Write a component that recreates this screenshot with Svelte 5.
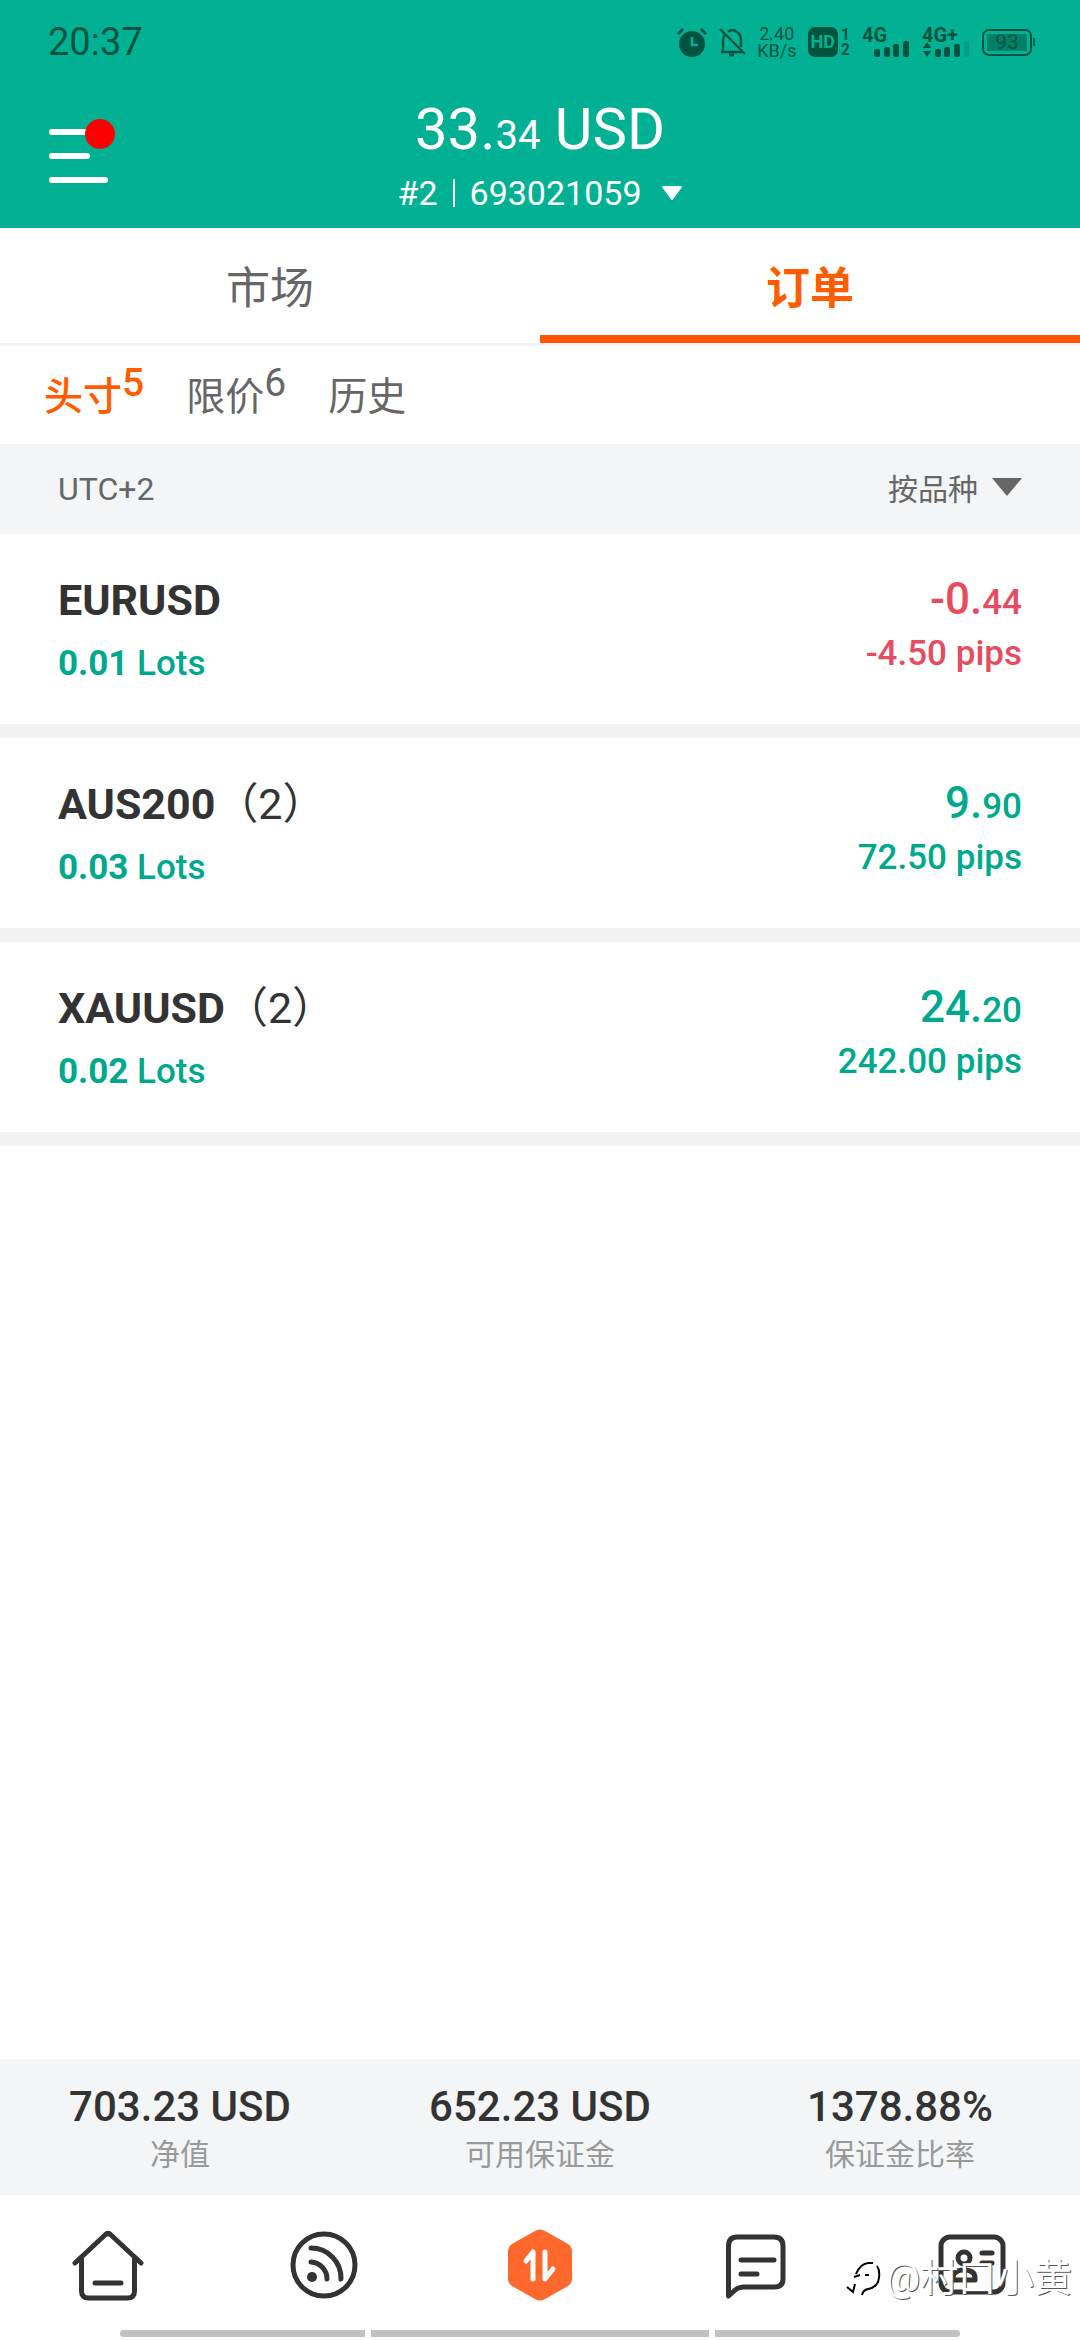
<script lang="ts">
	type Position = {
		symbol: string;
		count?: number;
		lots: string;
		profit: [string, string];
		pips: string;
		loss?: boolean;
	};

	const positions: Position[] = [
		{ symbol: 'EURUSD', lots: '0.01', profit: ['-0.', '44'], pips: '-4.50', loss: true },
		{ symbol: 'AUS200', count: 2, lots: '0.03', profit: ['9.', '90'], pips: '72.50' },
		{ symbol: 'XAUUSD', count: 2, lots: '0.02', profit: ['24.', '20'], pips: '242.00' }
	];

	const tabs = ['市场', '订单'];
	const filters = [
		{ label: '头寸', count: 5 },
		{ label: '限价', count: 6 },
		{ label: '历史', count: 0 }
	];
	const summary = [
		{ value: '703.23 USD', label: '净值' },
		{ value: '652.23 USD', label: '可用保证金' },
		{ value: '1378.88%', label: '保证金比率' }
	];

	let activeTab = $state('订单');
	let activeFilter = $state('头寸');
	let sortBy = $state('symbol');
</script>

<div class="app">
	<header>
		<div class="status">
			<time>20:37</time>
			<div class="status-icons">
				<svg width="30" height="30" viewBox="0 0 30 30">
					<circle cx="15" cy="17" r="13" fill="currentColor" />
					<path d="M1 7 6 2M29 7 24 2" stroke="currentColor" stroke-width="3" />
					<path d="M15 10v8h6" fill="none" stroke="#02b193" stroke-width="2.5" />
				</svg>
				<svg width="27" height="30" viewBox="0 0 27 30" fill="none" stroke="currentColor" stroke-width="2.4">
					<path d="M1 2 26 27M4 25V13Q4 10 6 8M9 5Q13 1 18 5Q22 8 22 13V20M2 25H24" />
					<path d="M10 28H15" stroke-width="3" />
				</svg>
				<span class="speed"><span>2.40</span><span>KB/s</span></span>
				<span class="volte">
					<span class="hd">HD</span>
					<span class="sims"><span>1</span><span>2</span></span>
				</span>
				<span class="signal">
					<span class="net">4G</span>
					<svg width="48" height="30" viewBox="0 0 48 30" fill="currentColor">
						<rect x="12" y="22" width="6" height="8" rx="2" />
						<rect x="22" y="20" width="6" height="10" rx="2" />
						<rect x="31" y="17" width="6" height="13" rx="2" />
						<rect x="41" y="14" width="6" height="16" rx="2" />
					</svg>
				</span>
				<span class="signal">
					<span class="net">4G+</span>
					<svg width="48" height="30" viewBox="0 0 48 30" fill="currentColor">
						<path d="M1 21 5 15 9 21ZM1 24H9L5 30Z" />
						<rect x="13" y="22" width="6" height="8" rx="2" />
						<rect x="22" y="20" width="6" height="10" rx="2" />
						<rect x="32" y="17" width="6" height="13" rx="2" />
						<rect x="42" y="14" width="5" height="16" rx="2" opacity="0.2" />
					</svg>
				</span>
				<span class="battery">
					<span class="level">93</span>
				</span>
			</div>
		</div>

		<div class="account">
			<button class="menu" type="button" aria-label="菜单">
				<svg width="68" height="66" viewBox="0 0 68 66">
					<path d="M4 15H40M4 39H39M4 63H57" stroke="#fff" stroke-width="6" stroke-linecap="round" />
					<circle cx="52" cy="17" r="15" fill="#f00" />
				</svg>
			</button>
			<div class="balance">
				<h1>33.<small>34</small> USD</h1>
				<button class="switch" type="button">
					<span>#2</span>
					<span class="divider"></span>
					<span>693021059</span>
					<svg width="22" height="15" viewBox="0 0 22 15">
						<path d="M2 1H20L11 13Z" fill="#fff" stroke="#fff" stroke-width="2" stroke-linejoin="round" />
					</svg>
				</button>
			</div>
		</div>
	</header>

	<nav class="tabs">
		{#each tabs as tab}
			<button type="button" class:active={activeTab === tab} onclick={() => (activeTab = tab)}>{tab}</button>
		{/each}
	</nav>

	<nav class="filters">
		{#each filters as { label, count }}
			<button type="button" class:active={activeFilter === label} onclick={() => (activeFilter = label)}>
				{label}{#if count}<sup>{count}</sup>{/if}
			</button>
		{/each}
	</nav>

	<div class="sort">
		<span>UTC+2</span>
		<label>
			<select bind:value={sortBy} aria-label="排序">
				<option value="symbol">按品种</option>
			</select>
			<svg width="30" height="22" viewBox="0 0 30 22"><path d="M0 0H30L15 18Z" fill="#666" /></svg>
		</label>
	</div>

	<main>
		{#each positions as position}
			<article class:loss={position.loss}>
				<div class="instrument">
					<h2>{position.symbol}{#if position.count}<span>（{position.count}）</span>{/if}</h2>
					<p><b>{position.lots}</b> Lots</p>
				</div>
				<div class="result">
					<strong>{position.profit[0]}<small>{position.profit[1]}</small></strong>
					<p>{position.pips} pips</p>
				</div>
			</article>
		{/each}
	</main>

	<footer>
		{#each summary as item}
			<div>
				<strong>{item.value}</strong>
				<span>{item.label}</span>
			</div>
		{/each}
	</footer>

	<nav class="bottom">
		<a href="#home" aria-label="首页">
			<svg width="72" height="72" viewBox="0 0 72 72">
				<path d="M3 34 33 6Q36 3 39 6L69 34M9.5 30V62Q9.5 69 16.5 69H55.5Q62.5 69 62.5 62V30M23 54H49" />
			</svg>
		</a>
		<a href="#feed" aria-label="动态">
			<svg width="72" height="72" viewBox="0 0 72 72">
				<circle cx="36" cy="36" r="31" />
				<path d="M23 19A30 30 0 0 1 53 50M23 33A17 17 0 0 1 39 50" />
				<circle class="solid" cx="24" cy="48" r="5" />
			</svg>
		</a>
		<a href="#trade" aria-label="交易">
			<svg width="72" height="72" viewBox="0 0 72 72">
				<path class="hexagon" d="M31 2Q36 -1 41 2L64 15Q68 18 68 22V50Q68 54 64 57L41 70Q36 73 31 70L8 57Q4 54 4 50V22Q4 18 8 15Z" />
				<path class="arrows" d="M22 32 29 23V50M41 23V50L49 40" />
			</svg>
		</a>
		<a href="#messages" aria-label="消息">
			<svg width="72" height="72" viewBox="0 0 72 72">
				<path d="M8.5 67V17Q8.5 8 17 8H54Q63 8 63 17V50Q63 58 54 58H24Q18 58 14 62Z" />
				<path d="M21 31H54M21 45H37" />
			</svg>
		</a>
		<a href="#profile" aria-label="我的">
			<svg width="72" height="72" viewBox="0 0 72 72">
				<rect x="5" y="8" width="62" height="55" rx="9" />
				<circle cx="28" cy="29" r="6" />
				<path d="M17 51V49Q17 41 28 41Q39 41 39 49V51ZM46 24H56M46 34H56" />
			</svg>
		</a>
		<div class="watermark">
			<svg width="36" height="38" viewBox="0 0 36 38">
				<path d="M10 15Q14 5 22 4H27M8 18 14 16M9 25 7 33 1 28M19 16H23M31 7Q35 13 32 23Q29 29 22 30Q17 31 16 36" />
			</svg>
			<span>@村口小黄</span>
		</div>
	</nav>

	<div class="home-bar"><i></i><i></i><i></i></div>
</div>

<style>
	:global(body) {
		margin: 0;
		background: #fff;
	}

	.app {
		display: flex;
		flex-direction: column;
		min-height: 100vh;
		color: #333;
		font-family: Roboto, 'Noto Sans CJK SC', sans-serif;
	}

	button,
	select {
		margin: 0;
		padding: 0;
		border: 0;
		background: none;
		color: inherit;
		font: inherit;
	}

	h1,
	h2,
	p {
		margin: 0;
	}

	small {
		line-height: 1;
	}

	header {
		height: 228px;
		background: #02b193;
		color: #fff;
	}

	.status {
		display: flex;
		justify-content: space-between;
		align-items: center;
		height: 84px;
		padding: 0 48px;
		color: #00543f;
		font-size: 38px;
	}

	.status-icons {
		display: flex;
		align-items: center;
		gap: 12px;
	}

	.speed {
		display: flex;
		flex-direction: column;
		align-items: center;
		width: 38px;
		font-size: 18px;
		line-height: 17px;
	}

	.volte {
		display: flex;
		gap: 3px;
	}

	.hd {
		width: 30px;
		border-radius: 7px;
		background: #00543f;
		color: #02b193;
		font-size: 18px;
		font-weight: 700;
		line-height: 30px;
		text-align: center;
	}

	.sims {
		display: flex;
		flex-direction: column;
		font-size: 16px;
		font-weight: 700;
		line-height: 15px;
	}

	.signal {
		position: relative;
		height: 30px;
	}

	.signal svg {
		display: block;
	}

	.net {
		position: absolute;
		top: -1px;
		left: 0;
		font-size: 20px;
		font-weight: 700;
		line-height: 18px;
	}

	.battery {
		position: relative;
		padding: 3px;
		border: 2px solid #00543f;
		border-radius: 7px;
	}

	.battery::after {
		content: '';
		position: absolute;
		top: 7px;
		right: -5px;
		width: 2px;
		height: 8px;
		background: #00543f;
	}

	.level {
		display: block;
		width: 40px;
		background: #018069;
		font-size: 21px;
		line-height: 17px;
		text-align: center;
	}

	.account {
		display: grid;
		grid-template-columns: 1fr auto 1fr;
		padding: 0 48px;
	}

	.menu {
		justify-self: start;
		align-self: start;
		margin-top: 33px;
	}

	.menu svg {
		display: block;
	}

	.balance {
		display: flex;
		flex-direction: column;
		align-items: center;
	}

	h1 {
		padding-top: 10px;
		font-size: 58px;
		font-weight: 400;
		line-height: 70px;
	}

	h1 small {
		font-size: 40px;
	}

	.switch {
		display: flex;
		align-items: center;
		gap: 15px;
		font-size: 34px;
		line-height: 58px;
	}

	.switch svg {
		margin-left: 4px;
	}

	.divider {
		width: 2px;
		height: 28px;
		background: #fff;
	}

	.tabs {
		display: flex;
		height: 118px;
		box-sizing: border-box;
		border-bottom: 3px solid #f2f2f2;
	}

	.tabs button {
		flex: 1;
		padding-top: 6px;
		border-bottom: 8px solid transparent;
		color: #666;
		font-size: 44px;
	}

	.tabs .active {
		border-color: #ff5500;
		color: #ff5c00;
		font-weight: 700;
	}

	.filters {
		display: flex;
		gap: 42px;
		height: 98px;
		padding-left: 44px;
		color: #666;
		font-size: 39px;
		line-height: 102px;
	}

	.filters .active {
		color: #ff5c00;
		font-weight: 500;
	}

	sup {
		font-size: 39px;
		line-height: 0;
		vertical-align: 14px;
	}

	.sort {
		display: flex;
		justify-content: space-between;
		align-items: center;
		height: 90px;
		padding: 0 58px;
		background: #f4f5f7;
		color: #666;
		font-size: 32px;
	}

	.sort label {
		display: flex;
		align-items: center;
		gap: 14px;
		font-size: 30px;
	}

	.sort select {
		appearance: none;
	}

	main {
		flex: 1;
	}

	article {
		display: flex;
		justify-content: space-between;
		padding: 36px 58px 26px;
		border-bottom: 14px solid #f2f2f2;
		color: #00a98d;
	}

	.loss .result {
		color: #e64c60;
	}

	h2 {
		color: #333;
		font-size: 43px;
		font-weight: 700;
		line-height: 60px;
	}

	h2 span {
		font-weight: 400;
	}

	.instrument p {
		font-size: 35px;
		font-weight: 500;
		line-height: 68px;
	}

	.result {
		text-align: right;
	}

	.result strong {
		display: block;
		font-size: 44px;
		font-weight: 500;
		line-height: 58px;
	}

	.result small {
		font-size: 35px;
	}

	.result p {
		font-size: 35px;
		font-weight: 500;
		line-height: 52px;
	}

	footer {
		display: flex;
		height: 136px;
		background: #f4f5f7;
	}

	footer div {
		flex: 1;
		display: flex;
		flex-direction: column;
		align-items: center;
		padding-top: 20px;
	}

	footer strong {
		font-size: 42px;
		font-weight: 500;
		line-height: 56px;
	}

	footer span {
		color: #999;
		font-size: 30px;
		line-height: 40px;
	}

	.bottom {
		position: relative;
		display: flex;
		height: 135px;
	}

	.bottom a {
		flex: 1;
		display: flex;
		justify-content: center;
		padding-top: 34px;
	}

	.bottom a svg {
		fill: none;
		stroke: #333;
		stroke-width: 5;
		stroke-linecap: round;
		stroke-linejoin: round;
	}

	.bottom .solid {
		fill: #333;
		stroke: none;
	}

	.bottom .hexagon {
		fill: #ff682c;
		stroke: none;
	}

	.bottom .arrows {
		stroke: #fff;
	}

	.watermark {
		position: absolute;
		right: 8px;
		bottom: 30px;
		display: flex;
		align-items: center;
		gap: 4px;
		color: #fff;
		font-size: 38px;
		line-height: 44px;
		text-shadow: 1px 1px 0 #555;
	}

	.watermark path {
		fill: none;
		stroke: #000;
		stroke-width: 2;
	}

	.home-bar {
		display: flex;
		gap: 6px;
		height: 7px;
		margin: 0 120px 3px;
		border-radius: 4px;
		overflow: hidden;
	}

	.home-bar i {
		flex: 1;
		background: #c1c1c1;
	}

	.home-bar i:nth-child(2) {
		flex: 1.38;
	}
</style>
